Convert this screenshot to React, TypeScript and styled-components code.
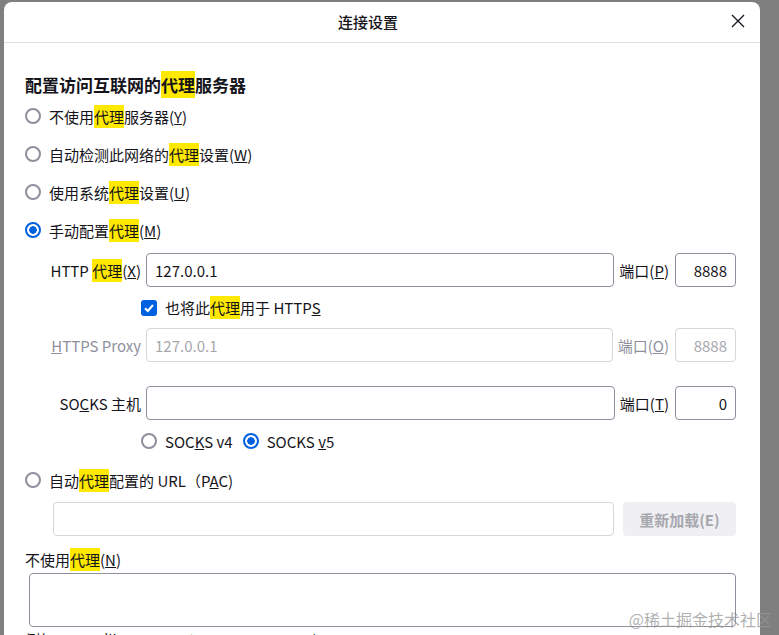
import styled, { createGlobalStyle } from "styled-components";

const GlobalStyle = createGlobalStyle`
  html, body {
    margin: 0;
    padding: 0;
    background: #7f7f7f;
    overflow: hidden;
  }
  * {
    box-sizing: border-box;
  }
  body {
    font-family: "Noto Sans CJK SC", "Noto Sans", sans-serif;
    color: #15141a;
  }
`;

const Page = styled.div`
  position: relative;
  width: 779px;
  height: 635px;
  overflow: hidden;
  padding: 2px 19px 0 4px;
`;

const Dialog = styled.div`
  background: #fff;
  border-radius: 8px 8px 0 0;
  height: 700px;
`;

const Header = styled.div`
  display: flex;
  align-items: center;
  height: 41px;
  padding-left: 8px;
  border-bottom: 1px solid #e0e0e6;
`;

const Title = styled.div`
  flex: 1;
  text-align: center;
  font-size: 15px;
  font-weight: 500;
  margin-top: -2px;
`;

const CloseButton = styled.button`
  width: 28px;
  height: 28px;
  margin: -2px 8px 0 0;
  border: none;
  background: none;
  padding: 0;
  display: flex;
  align-items: center;
  justify-content: center;
  cursor: pointer;
`;

const Content = styled.div`
  padding: 0 24px 0 21px;
  font-size: 15px;
`;

const Heading = styled.div`
  margin-top: 30px;
  height: 24px;
  line-height: 24px;
  font-size: 17px;
  font-weight: 700;
`;

const Row = styled.div<{ $h: number; $indent?: number; $gap?: number }>`
  display: flex;
  align-items: center;
  height: ${(p) => p.$h}px;
  padding-left: ${(p) => p.$indent ?? 0}px;
  gap: ${(p) => p.$gap ?? 8}px;
`;

const Hl = styled.span`
  background: #ffe900;
  padding: 1px 0;
`;

const RadioDot = styled.span<{ $on?: boolean }>`
  width: 16px;
  height: 16px;
  border-radius: 50%;
  flex: none;
  border: 2px solid ${(p) => (p.$on ? "#0061e0" : "#8f8f9d")};
  background: ${(p) =>
    p.$on
      ? "radial-gradient(circle, #0061e0 0 3.5px, #fff 4px)"
      : "#fff"};
`;

const CheckBox = styled.span`
  width: 16px;
  height: 16px;
  border-radius: 3px;
  background: #0061e0;
  flex: none;
  display: flex;
  align-items: center;
  justify-content: center;
`;

const Label = styled.span<{ $disabled?: boolean }>`
  white-space: nowrap;
  color: ${(p) => (p.$disabled ? "#8f8f9d" : "#15141a")};
`;

const FieldRow = styled.div<{ $mt: number }>`
  display: flex;
  align-items: center;
  height: 34px;
  margin-top: ${(p) => p.$mt}px;
`;

const FieldLabel = styled.span<{ $disabled?: boolean }>`
  width: 116px;
  flex: none;
  text-align: right;
  white-space: nowrap;
  color: ${(p) => (p.$disabled ? "#8f8f9d" : "#15141a")};
`;

const TextInput = styled.div<{ $disabled?: boolean; $right?: boolean }>`
  height: 34px;
  border: 1px solid ${(p) => (p.$disabled ? "#d7d7db" : "#8f8f9d")};
  border-radius: 4px;
  display: flex;
  align-items: center;
  justify-content: ${(p) => (p.$right ? "flex-end" : "flex-start")};
  padding: 0 8px;
  color: ${(p) => (p.$disabled ? "#a7a7ae" : "#15141a")};
  white-space: nowrap;
`;

const HostInput = styled(TextInput)`
  flex: 1;
  margin-left: 5px;
`;

const PortLabel = styled(Label)`
  margin-left: 5px;
`;

const PortInput = styled(TextInput)`
  width: 61px;
  flex: none;
  margin-left: 6px;
`;

const PacRow = styled.div`
  display: flex;
  align-items: center;
  gap: 9px;
  margin-top: 4px;
  padding-left: 28px;
`;

const PacInput = styled(TextInput)`
  flex: 1;
`;

const ReloadButton = styled.div`
  width: 113px;
  height: 34px;
  border-radius: 4px;
  background: #f0f0f4;
  color: #a7a7ae;
  font-weight: 700;
  font-size: 15px;
  display: flex;
  align-items: center;
  justify-content: center;
`;

const PlainLabel = styled.div`
  margin-top: 12px;
  height: 24px;
  line-height: 24px;
`;

const TextArea = styled.div`
  margin: 1px 0 0 4px;
  height: 54px;
  border: 1px solid #8f8f9d;
  border-radius: 4px;
`;

const Hint = styled.div`
  margin-top: 2px;
  color: #15141a;
`;

const Watermark = styled.div`
  position: absolute;
  right: 7px;
  bottom: 4px;
  font-size: 16px;
  color: rgba(150, 150, 150, 0.75);
  white-space: nowrap;
`;

function Radio({ on, children }: { on?: boolean; children: React.ReactNode }) {
  return (
    <Row $h={38}>
      <RadioDot $on={on} />
      <Label>{children}</Label>
    </Row>
  );
}

export default function App() {
  return (
    <>
      <GlobalStyle />
      <Page>
        <Dialog>
          <Header>
            <Title>连接设置</Title>
            <CloseButton>
              <svg width="14" height="14" viewBox="0 0 14 14">
                <path d="M1 1L13 13M13 1L1 13" stroke="#15141a" strokeWidth="1.3" />
              </svg>
            </CloseButton>
          </Header>
          <Content>
            <Heading>
              配置访问互联网的<Hl>代理</Hl>服务器
            </Heading>
            <Radio>
              不使用<Hl>代理</Hl>服务器(<u>Y</u>)
            </Radio>
            <Radio>
              自动检测此网络的<Hl>代理</Hl>设置(<u>W</u>)
            </Radio>
            <Radio>
              使用系统<Hl>代理</Hl>设置(<u>U</u>)
            </Radio>
            <Radio on>
              手动配置<Hl>代理</Hl>(<u>M</u>)
            </Radio>

            <FieldRow $mt={4}>
              <FieldLabel>
                HTTP <Hl>代理</Hl>(<u>X</u>)
              </FieldLabel>
              <HostInput>127.0.0.1</HostInput>
              <PortLabel>
                端口(<u>P</u>)
              </PortLabel>
              <PortInput $right>8888</PortInput>
            </FieldRow>
            <Row $h={41} $indent={116}>
              <CheckBox>
                <svg width="12" height="12" viewBox="0 0 12 12">
                  <path d="M2 6.2L4.8 9L10 3" stroke="#fff" strokeWidth="2" fill="none" />
                </svg>
              </CheckBox>
              <Label>
                也将此<Hl>代理</Hl>用于 HTTP<u>S</u>
              </Label>
            </Row>
            <FieldRow $mt={0}>
              <FieldLabel $disabled>
                <u>H</u>TTPS Proxy
              </FieldLabel>
              <HostInput $disabled>127.0.0.1</HostInput>
              <PortLabel $disabled>
                端口(<u>O</u>)
              </PortLabel>
              <PortInput $disabled $right>
                8888
              </PortInput>
            </FieldRow>

            <FieldRow $mt={24}>
              <FieldLabel>
                SO<u>C</u>KS 主机
              </FieldLabel>
              <HostInput />
              <PortLabel>
                端口(<u>T</u>)
              </PortLabel>
              <PortInput $right>0</PortInput>
            </FieldRow>
            <Row $h={42} $indent={116} $gap={8}>
              <RadioDot />
              <Label>
                SOC<u>K</u>S v4
              </Label>
              <RadioDot $on style={{ marginLeft: 2 }} />
              <Label>
                SOCKS <u>v</u>5
              </Label>
            </Row>
            <Row $h={36}>
              <RadioDot />
              <Label>
                自动<Hl>代理</Hl>配置的 URL（P<u>A</u>C)
              </Label>
            </Row>
            <PacRow>
              <PacInput $disabled />
              <ReloadButton>重新加载(E)</ReloadButton>
            </PacRow>
            <PlainLabel>
              不使用<Hl>代理</Hl>(<u>N</u>)
            </PlainLabel>
            <TextArea />
            <Hint>例如：.mozilla.org，.net.nz，192.168.1.0/24</Hint>
          </Content>
        </Dialog>
        <Watermark>@稀土掘金技术社区</Watermark>
      </Page>
    </>
  );
}
